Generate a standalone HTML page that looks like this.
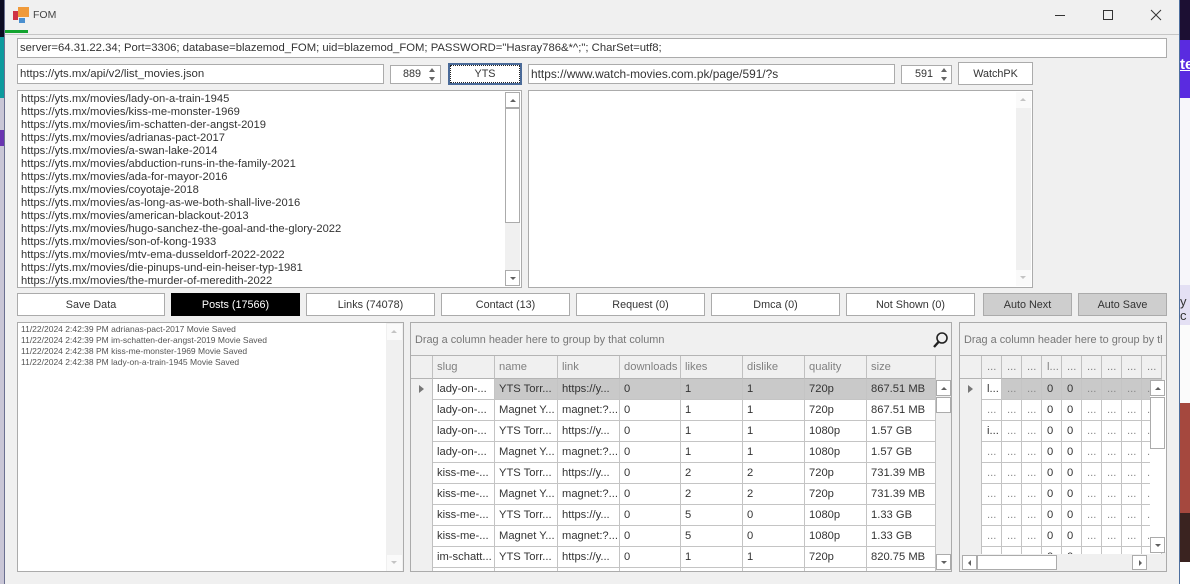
<!DOCTYPE html>
<html><head><meta charset="utf-8"><title>FOM</title>
<style>
html,body{margin:0;padding:0;width:1190px;height:584px;overflow:hidden;background:#fff}
*{box-sizing:border-box}
body{font-family:"Liberation Sans",sans-serif;font-size:11.2px;color:#333;position:relative}
.a{position:absolute}
.box{position:absolute;background:#fff;border:1px solid #ababab}
.inp{position:absolute;background:#fff;border:1px solid #ababab;padding:0 2px;line-height:18px;white-space:nowrap;overflow:hidden;color:#333}
.btn{position:absolute;background:#fff;border:1px solid #ababab;text-align:center;color:#333;line-height:23px;white-space:nowrap;font-size:10.8px}
.sb{position:absolute;background:#f0f0f0}
.sbtn{position:absolute;background:#fff;border:1px solid #ababab;width:15px;height:16px}
.dis{border:0;background:#fafafa}
.u,.d,.l,.r{position:absolute;width:0;height:0;border-style:solid;border-color:transparent}
.u{left:4px;top:6px;border-width:0 3px 3px 3px;border-bottom-color:#606060}
.d{left:4px;top:6px;border-width:3px 3px 0 3px;border-top-color:#606060}
.l{left:5px;top:4px;border-width:3px 3px 3px 0;border-right-color:#606060}
.r{left:6px;top:4px;border-width:3px 0 3px 3px;border-left-color:#606060}
.dis .u{border-bottom-color:#c4c4c4}.dis .d{border-top-color:#c4c4c4}
.list{position:absolute;left:3px;top:2px;line-height:13px;color:#333;white-space:nowrap}
.log{position:absolute;left:3px;top:1px;font-size:8.5px;line-height:11px;color:#555;white-space:nowrap}
.grp{position:absolute;left:0;top:0;right:0;height:33px;background:#f0f0f0;border-bottom:1px solid #b4b4b4;color:#777;line-height:35px;padding-left:4px;white-space:nowrap;overflow:hidden;font-size:10.9px}
table{border-collapse:separate;border-spacing:0;table-layout:fixed;position:absolute}
td{padding:1px 0 0 4px;height:21px;border-right:1px solid #c4c4c4;border-bottom:1px solid #c4c4c4;background:#fff;white-space:nowrap;overflow:hidden;color:#333;line-height:19px}
tr.h td{height:23px;background:#f0f0f0;color:#808080;border-right:1px solid #c0c0c0;border-bottom:1px solid #b4b4b4;line-height:21px}
td.i,tr.h td.i,tr.s td.i{background:#f0f0f0;border-right:1px solid #c0c0c0;border-bottom:0;padding:0;position:relative}
tr.h td.i{border-bottom:1px solid #b4b4b4}
tr.s td{background:#c9c9c9}
tr.s td.w{background:#fff}
.t2 td{padding-left:5px;color:#888}
.t2 td.n{color:#333;padding-left:5px}
.tri{position:absolute;left:8px;top:6px;width:0;height:0;border-style:solid;border-color:transparent;border-width:4px 0 4px 5px;border-left-color:#777}
</style></head>
<body>
<!-- desktop behind -->
<div class="a" style="left:0;top:0;width:5px;height:37px;background:#0c0c22"></div>
<div class="a" style="left:0;top:37px;width:5px;height:61px;background:#0d9a9e"></div>
<div class="a" style="left:0;top:98px;width:5px;height:486px;background:#c9c6d6"></div>
<div class="a" style="left:0;top:130px;width:5px;height:16px;background:#6a35b0"></div>
<div class="a" style="left:4px;top:0;width:1px;height:584px;background:#6b7090"></div>
<div class="a" style="left:1180px;top:0;width:10px;height:40px;background:#1c0f33"></div>
<div class="a" style="left:1180px;top:40px;width:10px;height:58px;background:#5a2be0"></div>
<div class="a" style="left:1180px;top:56px;color:#fff;font-weight:bold;font-size:15px;line-height:18px;width:10px;overflow:hidden;text-decoration:underline">te</div>
<div class="a" style="left:1180px;top:98px;width:10px;height:187px;background:#f7f6fa"></div>
<div class="a" style="left:1180px;top:285px;width:10px;height:40px;background:#e4e0f4"></div>
<div class="a" style="left:1180px;top:295px;width:10px;font-size:13px;line-height:14px;overflow:hidden;color:#333">y c</div>
<div class="a" style="left:1180px;top:325px;width:10px;height:78px;background:#fbfbfb"></div>
<div class="a" style="left:1180px;top:403px;width:10px;height:110px;background:#a5483e"></div>
<div class="a" style="left:1180px;top:513px;width:10px;height:49px;background:#3a2320"></div>
<!-- window -->
<div class="a" style="left:5px;top:0;width:1175px;height:584px;background:#f0f0f0;border-right:1px solid #4d6f9e"></div>
<div class="a" style="left:5px;top:34px;width:1174px;height:1px;background:#c6c6c6"></div>
<div class="a" style="left:5px;top:30px;width:23px;height:3px;background:#12a32f"></div>
<!-- title icon -->
<div class="a" style="left:13px;top:11px;width:5px;height:9px;background:#cf3345"></div>
<div class="a" style="left:18px;top:7px;width:11px;height:10px;background:#f09a3a"></div>
<div class="a" style="left:19px;top:18px;width:6px;height:5px;background:#4a8fcf"></div>
<div class="a" style="left:33px;top:8px;line-height:14px;font-size:10.5px;color:#444">FOM</div>
<!-- window controls -->
<svg class="a" style="left:1050px;top:5px" width="120" height="20" fill="none" stroke="#333" stroke-width="1">
<path d="M5 10.5H15"/><rect x="53.5" y="5.5" width="9" height="9"/><path d="M101 5L111 15M111 5L101 15"/>
</svg>
<!-- inputs -->
<div class="inp" style="left:17px;top:38px;width:1150px;height:20px;font-size:11.3px">server=64.31.22.34; Port=3306; database=blazemod_FOM; uid=blazemod_FOM; PASSWORD="Hasray786&amp;*^;"; CharSet=utf8;</div>
<div class="inp" style="left:17px;top:64px;width:367px;height:20px;font-size:11.4px">https://yts.mx/api/v2/list_movies.json</div>
<div class="inp" style="left:390px;top:65px;width:51px;height:19px;padding-left:12px;line-height:16px;font-size:10.8px">889</div>
<div class="a" style="left:429px;top:68px;width:0;height:0;border:solid transparent;border-width:0 3px 4px 3px;border-bottom-color:#666"></div>
<div class="a" style="left:429px;top:77px;width:0;height:0;border:solid transparent;border-width:4px 3px 0 3px;border-top-color:#666"></div>
<div class="btn" style="left:448px;top:63px;width:74px;height:22px;border:2px solid #4a6a98;line-height:18px;outline:1px dotted #222;outline-offset:-3px">YTS</div>
<div class="inp" style="left:528px;top:64px;width:367px;height:20px;font-size:11.9px">https://www.watch-movies.com.pk/page/591/?s</div>
<div class="inp" style="left:901px;top:65px;width:51px;height:19px;padding-left:13px;line-height:16px;font-size:10.8px">591</div>
<div class="a" style="left:941px;top:68px;width:0;height:0;border:solid transparent;border-width:0 3px 4px 3px;border-bottom-color:#666"></div>
<div class="a" style="left:941px;top:77px;width:0;height:0;border:solid transparent;border-width:4px 3px 0 3px;border-top-color:#666"></div>
<div class="btn" style="left:958px;top:62px;width:75px;height:23px">WatchPK</div>
<!-- list 1 -->
<div class="box" style="left:17px;top:90px;width:505px;height:198px;overflow:hidden">
<div class="list">https://yts.mx/movies/lady-on-a-train-1945<br>https://yts.mx/movies/kiss-me-monster-1969<br>https://yts.mx/movies/im-schatten-der-angst-2019<br>https://yts.mx/movies/adrianas-pact-2017<br>https://yts.mx/movies/a-swan-lake-2014<br>https://yts.mx/movies/abduction-runs-in-the-family-2021<br>https://yts.mx/movies/ada-for-mayor-2016<br>https://yts.mx/movies/coyotaje-2018<br>https://yts.mx/movies/as-long-as-we-both-shall-live-2016<br>https://yts.mx/movies/american-blackout-2013<br>https://yts.mx/movies/hugo-sanchez-the-goal-and-the-glory-2022<br>https://yts.mx/movies/son-of-kong-1933<br>https://yts.mx/movies/mtv-ema-dusseldorf-2022-2022<br>https://yts.mx/movies/die-pinups-und-ein-heiser-typ-1981<br>https://yts.mx/movies/the-murder-of-meredith-2022</div>
</div>
<div class="sb" style="left:505px;top:92px;width:15px;height:194px"></div>
<div class="sbtn" style="left:505px;top:92px"><div class="u"></div></div>
<div class="sbtn" style="left:505px;top:108px;height:115px"></div>
<div class="sbtn" style="left:505px;top:270px"><div class="d"></div></div>
<!-- list 2 -->
<div class="box" style="left:528px;top:90px;width:505px;height:198px"></div>
<div class="sb" style="left:1016px;top:92px;width:15px;height:194px"></div>
<div class="sbtn dis" style="left:1016px;top:92px"><div class="u"></div></div>
<div class="sbtn dis" style="left:1016px;top:270px"><div class="d"></div></div>
<!-- buttons -->
<div class="btn" style="left:17px;top:293px;width:148px;height:23px">Save Data</div>
<div class="btn" style="left:171px;top:293px;width:129px;height:23px;background:#000;border-color:#000;color:#fff">Posts (17566)</div>
<div class="btn" style="left:306px;top:293px;width:129px;height:23px">Links (74078)</div>
<div class="btn" style="left:441px;top:293px;width:129px;height:23px">Contact (13)</div>
<div class="btn" style="left:576px;top:293px;width:129px;height:23px">Request (0)</div>
<div class="btn" style="left:711px;top:293px;width:129px;height:23px">Dmca (0)</div>
<div class="btn" style="left:846px;top:293px;width:129px;height:23px">Not Shown (0)</div>
<div class="btn" style="left:983px;top:293px;width:89px;height:23px;background:#cecece">Auto Next</div>
<div class="btn" style="left:1078px;top:293px;width:89px;height:23px;background:#cecece">Auto Save</div>
<!-- log -->
<div class="box" style="left:17px;top:322px;width:387px;height:250px;overflow:hidden">
<div class="log">11/22/2024 2:42:39 PM adrianas-pact-2017 Movie Saved<br>11/22/2024 2:42:39 PM im-schatten-der-angst-2019 Movie Saved<br>11/22/2024 2:42:38 PM kiss-me-monster-1969 Movie Saved<br>11/22/2024 2:42:38 PM lady-on-a-train-1945 Movie Saved</div>
</div>
<div class="sb" style="left:386px;top:323px;width:17px;height:248px"></div>
<div class="sbtn dis" style="left:387px;top:324px"><div class="u"></div></div>
<div class="sbtn dis" style="left:387px;top:555px"><div class="d"></div></div>
<!-- grid 1 -->
<div class="box" style="left:410px;top:322px;width:542px;height:250px;background:#f0f0f0;overflow:hidden">
<div class="grp">Drag a column header here to group by that column</div>
<svg class="a" style="left:520px;top:7px" width="20" height="20" fill="none" stroke="#222"><circle cx="11" cy="8" r="5" stroke-width="1.6"/><path d="M7.5 12L3 17" stroke-width="2.4"/></svg>
<div class="a" style="left:0;top:33px;width:525px;height:215px;overflow:hidden;background:#f0f0f0">
<table style="left:0;top:0;width:525px">
<colgroup><col style="width:22px"><col style="width:62px"><col style="width:63px"><col style="width:62px"><col style="width:61px"><col style="width:62px"><col style="width:62px"><col style="width:62px"><col style="width:69px"></colgroup>
<tr class="h"><td class="i"></td><td>slug</td><td>name</td><td>link</td><td>downloads</td><td>likes</td><td>dislike</td><td>quality</td><td>size</td></tr>
<tr class="s"><td class="i"><div class="tri"></div></td><td class="w">lady-on-...</td><td>YTS Torr...</td><td>https://y...</td><td>0</td><td>1</td><td>1</td><td>720p</td><td>867.51 MB</td></tr>
<tr><td class="i"></td><td>lady-on-...</td><td>Magnet Y...</td><td>magnet:?...</td><td>0</td><td>1</td><td>1</td><td>720p</td><td>867.51 MB</td></tr>
<tr><td class="i"></td><td>lady-on-...</td><td>YTS Torr...</td><td>https://y...</td><td>0</td><td>1</td><td>1</td><td>1080p</td><td>1.57 GB</td></tr>
<tr><td class="i"></td><td>lady-on-...</td><td>Magnet Y...</td><td>magnet:?...</td><td>0</td><td>1</td><td>1</td><td>1080p</td><td>1.57 GB</td></tr>
<tr><td class="i"></td><td>kiss-me-...</td><td>YTS Torr...</td><td>https://y...</td><td>0</td><td>2</td><td>2</td><td>720p</td><td>731.39 MB</td></tr>
<tr><td class="i"></td><td>kiss-me-...</td><td>Magnet Y...</td><td>magnet:?...</td><td>0</td><td>2</td><td>2</td><td>720p</td><td>731.39 MB</td></tr>
<tr><td class="i"></td><td>kiss-me-...</td><td>YTS Torr...</td><td>https://y...</td><td>0</td><td>5</td><td>0</td><td>1080p</td><td>1.33 GB</td></tr>
<tr><td class="i"></td><td>kiss-me-...</td><td>Magnet Y...</td><td>magnet:?...</td><td>0</td><td>5</td><td>0</td><td>1080p</td><td>1.33 GB</td></tr>
<tr><td class="i"></td><td>im-schatt...</td><td>YTS Torr...</td><td>https://y...</td><td>0</td><td>1</td><td>1</td><td>720p</td><td>820.75 MB</td></tr>
<tr><td class="i"></td><td></td><td></td><td></td><td></td><td></td><td></td><td></td><td></td></tr>
</table>
</div>
</div>
<div class="sbtn" style="left:936px;top:380px"><div class="u"></div></div>
<div class="sbtn" style="left:936px;top:397px"></div>
<div class="sbtn" style="left:936px;top:554px"><div class="d"></div></div>
<!-- grid 2 -->
<div class="box" style="left:959px;top:322px;width:208px;height:250px;background:#f0f0f0;overflow:hidden">
<div class="grp" style="padding-left:4px">Drag a column header here to group by that column</div>
<div class="a" style="left:0;top:33px;width:206px;height:198px;overflow:hidden;background:#f0f0f0">
<table class="t2" style="left:0;top:0;width:202px">
<colgroup><col style="width:22px"><col style="width:20px"><col style="width:20px"><col style="width:20px"><col style="width:20px"><col style="width:20px"><col style="width:20px"><col style="width:20px"><col style="width:20px"><col style="width:20px"></colgroup>
<tr class="h"><td class="i"></td><td>...</td><td>...</td><td>...</td><td>l...</td><td>...</td><td>...</td><td>...</td><td>...</td><td>...</td></tr>
<tr class="s"><td class="i"><div class="tri"></div></td><td class="w n">l...</td><td>...</td><td>...</td><td class="n">0</td><td class="n">0</td><td>...</td><td>...</td><td>...</td><td>...</td></tr>
<tr><td class="i"></td><td>...</td><td>...</td><td>...</td><td class="n">0</td><td class="n">0</td><td>...</td><td>...</td><td>...</td><td>...</td></tr>
<tr><td class="i"></td><td class="n">i...</td><td>...</td><td>...</td><td class="n">0</td><td class="n">0</td><td>...</td><td>...</td><td>...</td><td>...</td></tr>
<tr><td class="i"></td><td>...</td><td>...</td><td>...</td><td class="n">0</td><td class="n">0</td><td>...</td><td>...</td><td>...</td><td>...</td></tr>
<tr><td class="i"></td><td>...</td><td>...</td><td>...</td><td class="n">0</td><td class="n">0</td><td>...</td><td>...</td><td>...</td><td>...</td></tr>
<tr><td class="i"></td><td>...</td><td>...</td><td>...</td><td class="n">0</td><td class="n">0</td><td>...</td><td>...</td><td>...</td><td>...</td></tr>
<tr><td class="i"></td><td>...</td><td>...</td><td>...</td><td class="n">0</td><td class="n">0</td><td>...</td><td>...</td><td>...</td><td>...</td></tr>
<tr><td class="i"></td><td>...</td><td>...</td><td>...</td><td class="n">0</td><td class="n">0</td><td>...</td><td>...</td><td>...</td><td>...</td></tr>
<tr><td class="i"></td><td></td><td></td><td></td><td class="n">0</td><td class="n">0</td><td></td><td></td><td></td><td></td></tr>
</table>
</div>
</div>
<div class="a" style="left:1162px;top:323px;width:4px;height:32px;background:#f0f0f0"></div>
<div class="a" style="left:1162px;top:356px;width:4px;height:24px;background:#f0f0f0"></div>
<div class="a" style="left:1150px;top:380px;width:16px;height:172px;background:#fff"></div>
<div class="sbtn" style="left:1150px;top:380px"><div class="u"></div></div>
<div class="sbtn" style="left:1150px;top:397px;height:52px"></div>
<div class="sbtn" style="left:1150px;top:537px"><div class="d"></div></div>
<div class="a" style="left:960px;top:554px;width:206px;height:17px;background:#f0f0f0"></div>
<div class="sbtn" style="left:962px;top:555px;height:15px"><div class="l"></div></div>
<div class="sbtn" style="left:977px;top:555px;width:80px;height:15px"></div>
<div class="sbtn" style="left:1132px;top:555px;height:15px"><div class="r"></div></div>
</body></html>
